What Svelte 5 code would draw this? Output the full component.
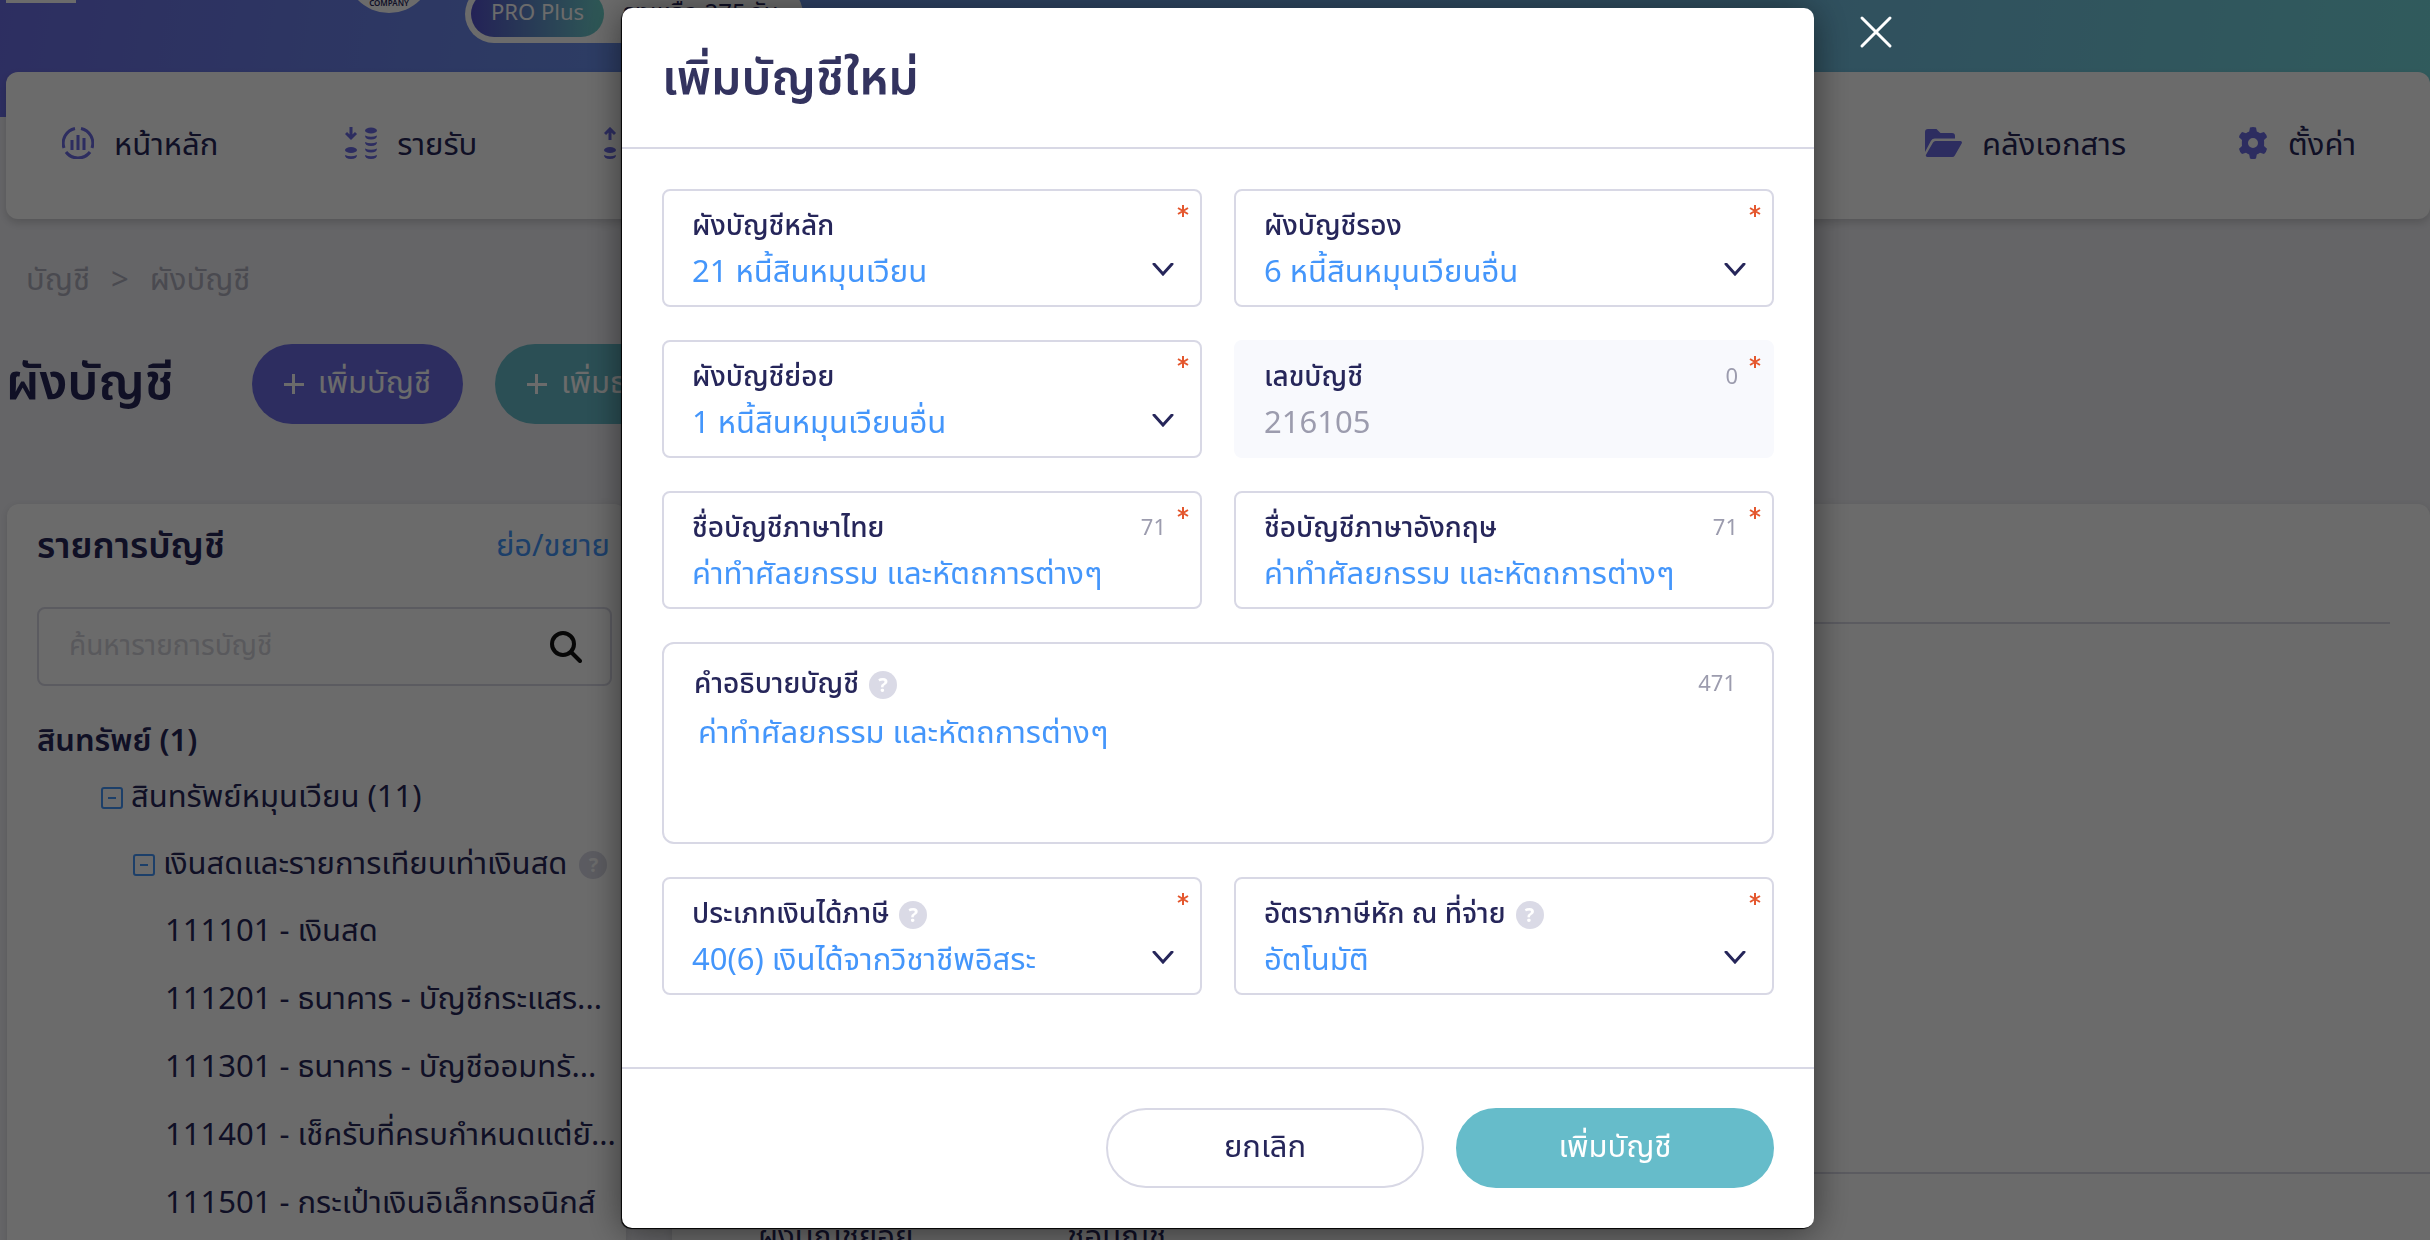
<script lang="ts">
  interface Field {
    id: string;
    label: string;
    value: string;
    kind: 'select' | 'input' | 'textarea';
    count?: number;
    help?: boolean;
    required?: boolean;
    disabled?: boolean;
  }

  const FIELDS: Field[] = [
    { id: 'main',   label: 'ผังบัญชีหลัก',       value: '21 หนี้สินหมุนเวียน',           kind: 'select', required: true },
    { id: 'second', label: 'ผังบัญชีรอง',        value: '6 หนี้สินหมุนเวียนอื่น',          kind: 'select', required: true },
    { id: 'sub',    label: 'ผังบัญชีย่อย',       value: '1 หนี้สินหมุนเวียนอื่น',          kind: 'select', required: true },
    { id: 'number', label: 'เลขบัญชี',          value: '216105',                      kind: 'input', count: 0, required: true, disabled: true },
    { id: 'nameTh', label: 'ชื่อบัญชีภาษาไทย',    value: 'ค่าทำศัลยกรรม และหัตถการต่างๆ', kind: 'input', count: 71, required: true },
    { id: 'nameEn', label: 'ชื่อบัญชีภาษาอังกฤษ', value: 'ค่าทำศัลยกรรม และหัตถการต่างๆ', kind: 'input', count: 71, required: true },
    { id: 'detail', label: 'คำอธิบายบัญชี',      value: 'ค่าทำศัลยกรรม และหัตถการต่างๆ', kind: 'textarea', count: 471, help: true },
    { id: 'income', label: 'ประเภทเงินได้ภาษี',   value: '40(6) เงินได้จากวิชาชีพอิสระ',    kind: 'select', help: true, required: true },
    { id: 'wht',    label: 'อัตราภาษีหัก ณ ที่จ่าย', value: 'อัตโนมัติ',                   kind: 'select', help: true, required: true },
  ];

  const ACCOUNTS = [
    '111101 - เงินสด',
    '111201 - ธนาคาร - บัญชีกระแสร...',
    '111301 - ธนาคาร - บัญชีออมทรั...',
    '111401 - เช็ครับที่ครบกำหนดแต่ยั...',
    '111501 - กระเป๋าเงินอิเล็กทรอนิกส์',
  ];

  let open = $state(true);
  let search = $state('');
</script>

{#snippet help()}
  <span class="help" aria-hidden="true">?</span>
{/snippet}

{#snippet toggle()}
  <button class="toggle" type="button" aria-label="ย่อ/ขยาย">
    <svg viewBox="0 0 22 22" width="22" height="22">
      <rect x="1" y="1" width="20" height="20" rx="2" />
      <path d="M7 11h8" />
    </svg>
  </button>
{/snippet}

{#snippet coins(up: boolean)}
  <svg class="nav-icon" viewBox="0 0 32 32" width="32" height="32" aria-hidden="true">
    <path class="stroke" d={up ? 'M6 13V2M1 7l5-5 5 5' : 'M6 0v11M1 6l5 5 5-5'} />
    <ellipse cx="6" cy="23" rx="6" ry="3" />
    <path d="M0 28q6 2.400 12 0q0 4-6 4t-6-4z" />
    <ellipse cx="26" cy="3.500" rx="6" ry="3" />
    <path d="M20 8.500q6 2.400 12 0q0 4-6 4t-6-4zM20 15q6 2.400 12 0q0 4-6 4t-6-4zM20 21.500q6 2.400 12 0q0 4-6 4t-6-4zM20 28q6 2.400 12 0q0 4-6 4t-6-4z" />
  </svg>
{/snippet}

<div class="page">
  <header class="topbar">
    <button class="burger" type="button" aria-label="เมนู"></button>
    <div class="logo">COMPANY</div>
    <div class="plan">
      <span class="plan-name">PRO Plus</span>
      <span class="plan-left">คงเหลือ 275 วัน</span>
    </div>
  </header>

  <nav class="nav">
    <a href="#home">
      <svg class="nav-icon" viewBox="0 0 32 32" width="32" height="32" aria-hidden="true">
        <path class="stroke" d="M13 1.500A15 15 0 0 0 2 21M19 1.500A15 15 0 0 1 30 21M4 25a15 15 0 0 0 24 0M10 13v10M16 8v15M22 11v12" />
      </svg>
      หน้าหลัก
    </a>
    <a href="#income">{@render coins(false)} รายรับ</a>
    <a href="#expense" aria-label="รายจ่าย">{@render coins(true)}</a>
    <a class="nav-docs" href="#documents">
      <svg class="nav-icon" viewBox="0 0 37 28" width="37" height="28" aria-hidden="true">
        <path d="M0 23V3a3 3 0 0 1 3-3h8.500l4 4H27a3 3 0 0 1 3 3v2.500H10a4.500 4.500 0 0 0-4 2.200z" />
        <path d="M8 13.500A3 3 0 0 1 10.600 12H35.500a1.500 1.500 0 0 1 1.300 2.200l-7 12.300A3 3 0 0 1 27.200 28H2.300A1.500 1.500 0 0 1 1 25.800z" />
      </svg>
      คลังเอกสาร
    </a>
    <a href="#settings">
      <svg class="nav-icon" viewBox="0 0 30 32" width="30" height="32" aria-hidden="true">
        <path fill-rule="evenodd" d="M12 .500Q15-.500 18 .500L18.800 4.500Q20.500 5.200 22 6.200L26 4.900Q28.500 7.300 29 10.300L26 13Q26.300 16 26 19L29 21.700Q28.500 24.700 26 27.100L22 25.800Q20.500 26.800 18.800 27.500L18 31.500Q15 32.500 12 31.500L11.200 27.500Q9.500 26.800 8 25.800L4 27.100Q1.500 24.700 1 21.700L4 19Q3.700 16 4 13L1 10.300Q1.500 7.300 4 4.900L8 6.200Q9.500 5.200 11.200 4.500zM15 11a5 5 0 1 0 0 10a5 5 0 0 0 0-10z" />
      </svg>
      ตั้งค่า
    </a>
  </nav>

  <div class="crumbs">
    <a href="#accounting">บัญชี</a>
    <span>&gt;</span>
    <a href="#chart">ผังบัญชี</a>
  </div>

  <div class="heading">
    <h1>ผังบัญชี</h1>
    <button class="pill pill--purple" type="button"><span class="plus" aria-hidden="true"></span>เพิ่มบัญชี</button>
    <button class="pill pill--teal" type="button"><span class="plus" aria-hidden="true"></span>เพิ่มธนาคาร</button>
  </div>

  <div class="columns">
    <aside class="panel tree-panel">
      <div class="tree-head">
        <h2>รายการบัญชี</h2>
        <a href="#toggle">ย่อ/ขยาย</a>
      </div>
      <div class="search">
        <input type="text" aria-label="ค้นหารายการบัญชี" placeholder="ค้นหารายการบัญชี" bind:value={search} />
        <svg viewBox="0 0 32 32" width="32" height="32" aria-hidden="true">
          <circle cx="13" cy="13" r="11" />
          <path d="M21 21l9 9" />
        </svg>
      </div>
      <h3>สินทรัพย์ (1)</h3>
      <div class="branch branch--1">{@render toggle()} สินทรัพย์หมุนเวียน (11)</div>
      <div class="branch branch--2">{@render toggle()} เงินสดและรายการเทียบเท่าเงินสด {@render help()}</div>
      <ul>
        {#each ACCOUNTS as account}
          <li>{account}</li>
        {/each}
      </ul>
    </aside>

    <main class="panel detail-panel">
      <div class="detail-head"></div>
      <div class="detail-body"></div>
      <div class="detail-row">
        <span>ผังบัญชีย่อย</span>
        <span>ชื่อบัญชี</span>
      </div>
    </main>
  </div>
</div>

{#if open}
  <div class="overlay">
    <div class="modal" role="dialog" aria-modal="true" aria-labelledby="modal-title">
      <button class="close" type="button" aria-label="ปิด" onclick={() => (open = false)}>
        <svg viewBox="0 0 34 34" width="34" height="34">
          <path d="M3 3l28 28M31 3L3 31" />
        </svg>
      </button>

      <header class="modal-head">
        <h2 id="modal-title">เพิ่มบัญชีใหม่</h2>
      </header>

      <form class="modal-body" id="account-form">
        {#each FIELDS as f (f.id)}
          <div class="field field--{f.kind}" class:field--disabled={f.disabled}>
            <div class="field-top">
              <label for={f.id}>{f.label}</label>
              {#if f.help}{@render help()}{/if}
              {#if f.count !== undefined}<span class="count">{f.count}</span>{/if}
            </div>
            {#if f.kind === 'select'}
              <div class="select-row">
                <select id={f.id}>
                  <option>{f.value}</option>
                </select>
                <svg class="chevron" viewBox="0 0 22 13" width="22" height="13" aria-hidden="true">
                  <path d="M2 1l9 10 9-10" />
                </svg>
              </div>
            {:else if f.kind === 'input'}
              <input id={f.id} type="text" value={f.value} disabled={f.disabled} />
            {:else}
              <textarea id={f.id} rows="2" value={f.value}></textarea>
            {/if}
            {#if f.required}
              <svg class="star" viewBox="0 0 12 14" width="12" height="14" aria-hidden="true">
                <path d="M6 1v12M1 4l10 6M11 4L1 10" />
              </svg>
            {/if}
          </div>
        {/each}
      </form>

      <footer class="modal-foot">
        <button class="btn btn--plain" type="button" onclick={() => (open = false)}>ยกเลิก</button>
        <button class="btn btn--primary" type="submit" form="account-form">เพิ่มบัญชี</button>
      </footer>
    </div>
  </div>
{/if}

<style>
  :global(body) {
    --ink: #26265a;
    --blue: #4496fb;
    --purple: #6b6be5;
    --teal: #66bcca;
    --line: #d8d8e5;
    --muted: #9c9cae;
    background: #f1f1f6;
    color: var(--ink);
    font-family: 'Noto Sans Thai', 'Noto Sans', sans-serif;
    font-size: 31px;
    font-weight: 400;
    line-height: 44px;
  }

  .page,
  .page *,
  .overlay,
  .overlay * {
    box-sizing: border-box;
  }

  h1, h2, h3, ul {
    margin: 0;
    padding: 0;
  }

  a {
    color: inherit;
    text-decoration: none;
  }

  button, input, select, textarea {
    margin: 0;
    padding: 0;
    border: none;
    background: none;
    color: inherit;
    font: inherit;
  }

  /* ── page ── */
  .page {
    height: 100vh;
    overflow: hidden;
  }

  .topbar {
    height: 117px;
    padding: 0 6px 74px;
    overflow: hidden;
    display: flex;
    align-items: flex-end;
    background: linear-gradient(100deg, #6d6fe6, #6b90ee 25%, #72bfe0 75%, #74d8dc);
  }

  .burger {
    width: 70px;
    height: 8px;
    margin-bottom: 40px;
    background: #fff;
  }

  .logo {
    width: 88px;
    height: 88px;
    margin: 0 0 30px 269px;
    padding-bottom: 6px;
    flex: none;
    display: flex;
    align-items: flex-end;
    justify-content: center;
    border-radius: 50%;
    background: #fff;
    font: 600 8px/8px 'Noto Sans', sans-serif;
  }

  .plan {
    margin-left: 32px;
    padding: 6px 24px 6px 6px;
    display: flex;
    align-items: center;
    gap: 18px;
    border-radius: 29px;
    background: #fff;
    font-size: 22px;
    white-space: nowrap;
  }

  .plan-name {
    padding: 0 20px;
    border-radius: 23px;
    background: linear-gradient(90deg, #5552cf, #6ed3cb);
    color: #fff;
    line-height: 46px;
  }

  .plan-left {
    font-size: 24px;
  }

  .nav {
    position: relative;
    height: 147px;
    margin: -45px 0 0 6px;
    padding: 0 74px 0 56px;
    display: flex;
    align-items: center;
    border-radius: 12px;
    background: #fff;
    box-shadow: 0 4px 8px rgba(0, 0, 0, 0.16);
  }

  .nav a {
    margin-right: 127px;
    display: flex;
    align-items: center;
    gap: 20px;
  }

  .nav a:last-child { margin-right: 0; }

  .nav .nav-docs { margin: 0 112px 0 auto; }

  .nav-icon {
    flex: none;
    margin-bottom: 6px;
    fill: var(--purple);
  }

  .nav-icon .stroke {
    fill: none;
    stroke: var(--purple);
    stroke-width: 3;
  }

  .crumbs {
    padding: 40px 26px 0;
    display: flex;
    gap: 21px;
    color: #b0b0be;
  }

  .heading {
    margin: 41px 0 80px;
    padding-left: 6px;
    display: flex;
    align-items: center;
    gap: 32px;
  }

  .heading h1 {
    margin-right: 46px;
    font-size: 50px;
    font-weight: 600;
    line-height: 80px;
  }

  .pill {
    height: 80px;
    padding: 0 32px;
    display: flex;
    align-items: center;
    gap: 14px;
    border-radius: 40px;
    color: #fff;
  }

  .pill--purple { background: var(--purple); }
  .pill--teal { background: var(--teal); }

  .plus {
    width: 20px;
    height: 20px;
    background:
      linear-gradient(#fff, #fff) center / 20px 3px no-repeat,
      linear-gradient(#fff, #fff) center / 3px 20px no-repeat;
  }

  .columns {
    padding-left: 7px;
    display: flex;
    align-items: flex-start;
    gap: 46px;
  }

  .panel {
    min-height: 760px;
    border-radius: 12px;
    background: #fff;
    box-shadow: 0 2px 8px rgba(0, 0, 0, 0.12);
  }

  .tree-panel {
    width: 619px;
    flex: none;
    padding: 21px 14px 0 30px;
    white-space: nowrap;
  }

  .tree-head {
    margin-bottom: 38px;
    display: flex;
    justify-content: space-between;
  }

  .tree-head h2 {
    font-size: 36px;
    font-weight: 600;
  }

  .tree-panel h3 {
    font-size: 31px;
    font-weight: 600;
  }

  .tree-head a {
    margin-right: 2px;
    color: var(--blue);
  }

  .search {
    height: 79px;
    margin-bottom: 34px;
    padding: 0 28px 0 30px;
    display: flex;
    align-items: center;
    border: 2px solid var(--line);
    border-radius: 8px;
  }

  .search input {
    flex: 1;
    min-width: 0;
    height: 44px;
    font-size: 28px;
    outline: none;
  }

  .search input::placeholder {
    color: #d3d3dc;
    opacity: 1;
  }

  .search svg {
    fill: none;
    stroke: #111;
    stroke-width: 4;
    stroke-linecap: round;
  }

  .branch {
    height: 67px;
    display: flex;
    align-items: center;
    gap: 8px;
  }

  .branch--1 { padding-left: 64px; }
  .branch--2 { padding-left: 96px; }

  .toggle { display: flex; }

  .toggle svg {
    fill: none;
    stroke: var(--blue);
    stroke-width: 2;
  }

  .tree-panel ul {
    padding-left: 128px;
    list-style: none;
    line-height: 68px;
  }

  .detail-panel {
    flex: 1;
  }

  .detail-head {
    height: 120px;
    margin-right: 40px;
    border-bottom: 2px solid var(--line);
  }

  .detail-body {
    height: 550px;
    border-bottom: 2px solid var(--line);
  }

  .detail-row {
    padding: 42px 86px;
    display: flex;
    gap: 154px;
  }

  .help {
    width: 28px;
    height: 28px;
    margin-left: 4px;
    flex: none;
    border-radius: 50%;
    background: #dadae6;
    color: #fff;
    font: 700 20px/28px 'Noto Sans', sans-serif;
    text-align: center;
  }

  /* ── modal ── */
  .overlay {
    position: fixed;
    inset: 0;
    padding: 8px 0 12px 6px;
    display: flex;
    align-items: flex-start;
    justify-content: center;
    overflow: auto;
    background: rgba(0, 0, 0, 0.58);
  }

  .modal {
    position: relative;
    width: 1192px;
    max-width: 90%;
    border-radius: 10px;
    background: #fff;
    box-shadow: -1px 1px 1px #000, 0 4px 36px rgba(0, 0, 0, 0.5);
  }

  .close {
    position: absolute;
    top: 7px;
    left: calc(100% + 45px);
    display: flex;
  }

  .close svg {
    fill: none;
    stroke: #fff;
    stroke-width: 3;
    stroke-linecap: round;
  }

  .modal-head {
    padding: 36px 40px 32px;
    border-bottom: 2px solid var(--line);
  }

  .modal-head h2 {
    color: #33335f;
    font-size: 48px;
    font-weight: 600;
    line-height: 71px;
  }

  .modal-body {
    padding: 40px 40px 72px;
    display: grid;
    grid-template-columns: 1fr 1fr;
    gap: 33px 32px;
  }

  .field {
    position: relative;
    min-width: 0;
    padding: 18px 26px 10px 28px;
    border: 2px solid var(--line);
    border-radius: 8px;
  }

  .field--disabled {
    border-color: #f8f9fd;
    background: #f8f9fd;
  }

  .field--textarea {
    grid-column: 1 / -1;
    padding: 23px 28px 32px 30px;
    border-radius: 12px;
  }

  .field-top {
    height: 36px;
    margin-bottom: 6px;
    display: flex;
    align-items: center;
    gap: 6px;
    line-height: 36px;
  }

  .field--textarea .field-top {
    margin-bottom: 9px;
  }

  .field label {
    font-size: 28px;
    font-weight: 500;
  }

  .count {
    margin: 0 8px 0 auto;
    color: var(--muted);
    font-size: 22px;
  }

  .field input,
  .field select,
  .field textarea {
    width: 100%;
    height: 44px;
    display: block;
    appearance: none;
    color: var(--blue);
    outline: none;
  }

  .field input:disabled {
    color: var(--muted);
  }

  .field textarea {
    height: 98px;
    padding-left: 4px;
    resize: none;
  }

  .select-row {
    display: flex;
    align-items: center;
  }

  .chevron {
    flex: none;
    margin-bottom: 8px;
    fill: none;
    stroke: var(--ink);
    stroke-width: 3;
    stroke-linecap: round;
    pointer-events: none;
  }

  .star {
    position: absolute;
    top: 13px;
    right: 11px;
    fill: none;
    stroke: #e4572e;
    stroke-width: 2;
  }

  .modal-foot {
    padding: 39px 40px 40px;
    display: flex;
    justify-content: flex-end;
    gap: 32px;
    border-top: 2px solid var(--line);
  }

  .btn {
    width: 318px;
    height: 80px;
    border: 2px solid var(--line);
    border-radius: 40px;
  }

  .btn--primary {
    border-color: var(--teal);
    background: var(--teal);
    color: #fff;
  }
</style>
